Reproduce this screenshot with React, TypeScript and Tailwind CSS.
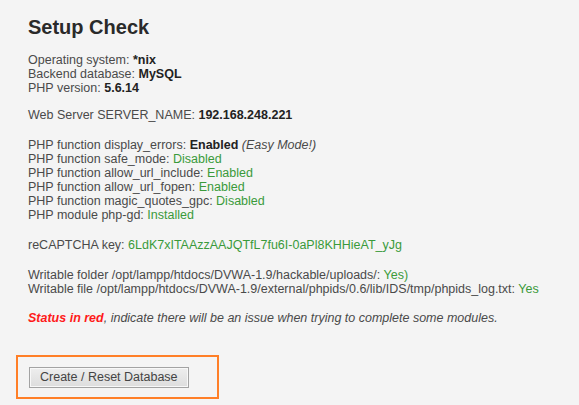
export default function App() {
  const ok = 'text-[#3a9a3a]'
  return (
    <div className="min-h-[405px] w-[579px] bg-[#f4f4f4] text-[#4a4a4a] font-['Liberation_Sans',Arial,sans-serif] text-[12.5px] leading-[14px] pl-[28px] pt-[15px]">
      <h1 className="text-[20px] leading-[24px] font-bold text-[#2a2a2a] mb-[14px]">Setup Check</h1>

      <p className="mb-[13px]">
        Operating system: <b className="text-[#222]">*nix</b>
        <br />
        Backend database: <b className="text-[#222]">MySQL</b>
        <br />
        PHP version: <b className="text-[#222]">5.6.14</b>
      </p>

      <p className="mb-[16px]">
        Web Server SERVER_NAME: <b className="text-[#222]">192.168.248.221</b>
      </p>

      <p className="mb-[16px]">
        PHP function display_errors: <b className="text-[#222]">Enabled</b> <i>(Easy Mode!)</i>
        <br />
        PHP function safe_mode: <span className={ok}>Disabled</span>
        <br />
        PHP function allow_url_include: <span className={ok}>Enabled</span>
        <br />
        PHP function allow_url_fopen: <span className={ok}>Enabled</span>
        <br />
        PHP function magic_quotes_gpc: <span className={ok}>Disabled</span>
        <br />
        PHP module php-gd: <span className={ok}>Installed</span>
      </p>

      <p className="mb-[16px]">
        reCAPTCHA key: <span className={ok}>6LdK7xITAAzzAAJQTfL7fu6I-0aPl8KHHieAT_yJg</span>
      </p>

      <p className="mb-[15px]">
        Writable folder /opt/lampp/htdocs/DVWA-1.9/hackable/uploads/: <span className={ok}>Yes)</span>
        <br />
        Writable file /opt/lampp/htdocs/DVWA-1.9/external/phpids/0.6/lib/IDS/tmp/phpids_log.txt:{' '}
        <span className={ok}>Yes</span>
      </p>

      <p className="italic">
        <span className="text-[#ff1a1a] font-bold">Status in red</span>, indicate there will be an issue when trying to
        complete some modules.
      </p>

      <div className="-ml-[12px] mt-[30px] w-[203px] h-[44px] border-2 border-[#ff7f27] flex items-center pl-[11px]">
        <button className="h-[21px] px-[10px] border border-[#a3a3a3] bg-gradient-to-b from-[#eeeeee] to-[#dddddd] text-[12.5px] leading-[14px] text-[#444] shadow-[inset_0_0_0_1px_#f8f8f8]">
          Create / Reset Database
        </button>
      </div>
    </div>
  )
}
